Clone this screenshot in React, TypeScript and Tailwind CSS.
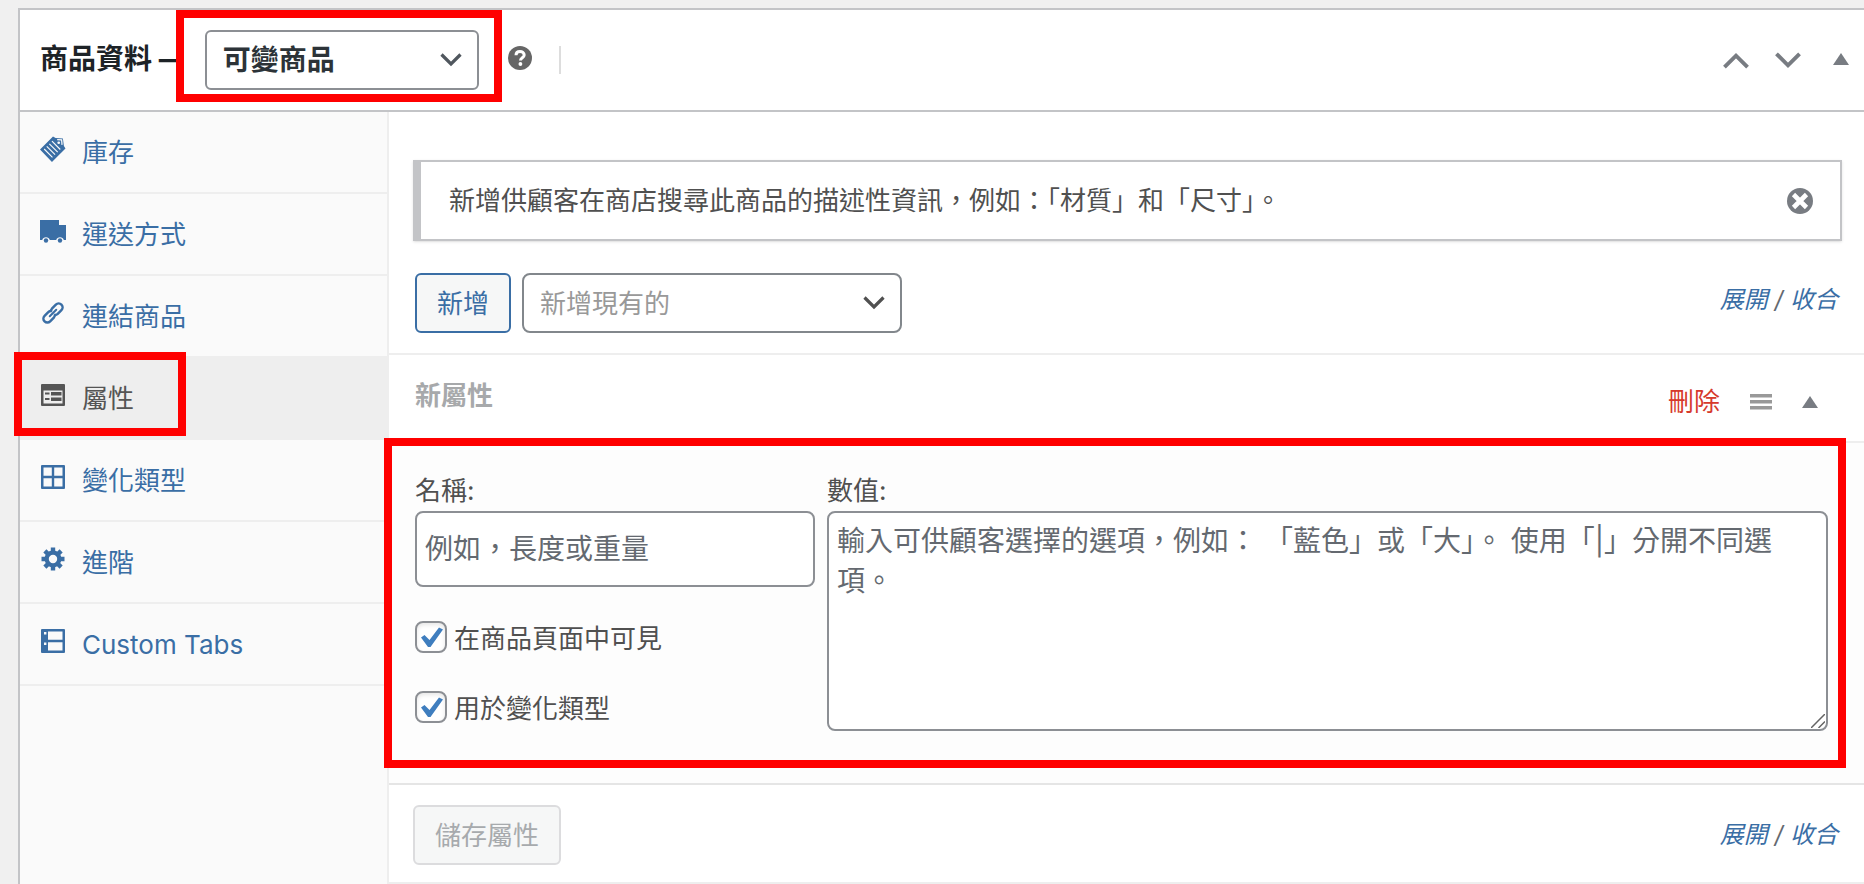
import { useState, type ComponentType, type ReactNode, type SVGProps } from "react";
import { clsx } from "clsx";

type IconProps = SVGProps<SVGSVGElement>;
type Icon = ComponentType<IconProps>;

function InventoryIcon(props: IconProps) {
  return (
    <svg viewBox="0 0 25 25" fill="none" {...props}>
      <path d="M12.500 0.500 15 2 22 2.500 23 9.500 24.500 12 11.500 25 0 13Z" fill="currentColor" />
      <path
        d="M4 12.500 12 20.500M6.500 10 14.500 18M9 7.500 17 15.500M11.500 5 19.500 13"
        stroke="#fafafa"
        strokeWidth="1.100"
      />
      <path d="M16.500 3.500 20.800 3.800 21.200 8.500" stroke="#fafafa" strokeWidth="1.200" />
      <circle cx="18" cy="6.500" r="1.300" fill="#fafafa" />
    </svg>
  );
}

function TruckIcon(props: IconProps) {
  return (
    <svg viewBox="0 0 26 24" fill="currentColor" {...props}>
      <path d="M0 1h19v5h7v15h-2.200a4 4 0 0 0-7.600 0H9.800a4 4 0 0 0-7.600 0H0Z" />
      <circle cx="6" cy="21.500" r="2.200" />
      <circle cx="20" cy="21.500" r="2.200" />
    </svg>
  );
}

function LinkIcon(props: IconProps) {
  return (
    <svg viewBox="0 0 24 24" fill="none" stroke="currentColor" strokeWidth="2.700" {...props}>
      <g transform="rotate(-45 12 12)">
        <path d="M12.500 14.300a4.400 4.400 0 0 1-3.500 2H3.300a4.300 4.300 0 0 1 0-8.600H9a4.400 4.400 0 0 1 3.500 2" />
        <path d="M11.500 9.700a4.400 4.400 0 0 1 3.500-2h5.700a4.300 4.300 0 0 1 0 8.600H15a4.400 4.400 0 0 1-3.500-2" />
        <path d="M7 12h10" strokeWidth="2.200" strokeLinecap="round" />
      </g>
    </svg>
  );
}

function AttributesIcon(props: IconProps) {
  return (
    <svg viewBox="0 0 24 22" fill="currentColor" {...props}>
      <path
        fillRule="evenodd"
        d="M1 0h22a1 1 0 0 1 1 1v20a1 1 0 0 1-1 1H1a1 1 0 0 1-1-1V1a1 1 0 0 1 1-1ZM2.500 6.500v13h19v-13Z"
      />
      <path d="M4 8.500h4.500v2H4ZM10 8h10.500v3.500H10ZM4 14h4.500v2H4ZM10 13.500h10.500V17H10Z" />
    </svg>
  );
}

function VariationsIcon(props: IconProps) {
  return (
    <svg viewBox="0 0 24 24" fill="currentColor" {...props}>
      <path
        fillRule="evenodd"
        d="M1 0h22a1 1 0 0 1 1 1v22a1 1 0 0 1-1 1H1a1 1 0 0 1-1-1V1a1 1 0 0 1 1-1ZM2.500 2.500v8.300h8.300V2.500ZM13.200 2.500v8.300h8.300V2.500ZM2.500 13.200v8.300h8.300v-8.300ZM13.200 13.200v8.300h8.300v-8.300Z"
      />
    </svg>
  );
}

const gearTeeth = [0, 45, 90, 135, 180, 225, 270, 315];

function GearIcon(props: IconProps) {
  return (
    <svg viewBox="0 0 24 24" {...props}>
      {gearTeeth.map((angle) => (
        <path key={angle} d="M9.800 0.500h4.400v6h-4.400Z" fill="currentColor" transform={`rotate(${angle} 12 12)`} />
      ))}
      <circle cx="12" cy="12" r="6.300" fill="none" stroke="currentColor" strokeWidth="4.200" />
    </svg>
  );
}

function CustomTabsIcon(props: IconProps) {
  return (
    <svg viewBox="0 0 24 24" fill="currentColor" {...props}>
      <path
        fillRule="evenodd"
        d="M1 0h22a1 1 0 0 1 1 1v22a1 1 0 0 1-1 1H1a1 1 0 0 1-1-1V1a1 1 0 0 1 1-1ZM7 2.500v8.300h14.500V2.500ZM7 13.200v8.300h14.500v-8.300ZM3 3v2.400h2.400V3ZM3 13.500v2.400h2.400v-2.400Z"
      />
    </svg>
  );
}

function HelpIcon(props: IconProps) {
  return (
    <svg viewBox="0 0 24 24" fill="none" {...props}>
      <circle cx="12" cy="12" r="12" fill="currentColor" />
      <path d="M8 9.200C8 6.600 9.800 5.500 12 5.500s4.200 1.200 4.200 3.500c0 2.700-3.700 2.800-3.700 5.500" stroke="#fff" strokeWidth="3" />
      <circle cx="12.400" cy="18" r="1.900" fill="#fff" />
    </svg>
  );
}

function DismissIcon(props: IconProps) {
  return (
    <svg viewBox="0 0 26 26" fill="none" {...props}>
      <circle cx="13" cy="13" r="13" fill="currentColor" />
      <path d="m6.500 6.500 13 13M19.500 6.500l-13 13" stroke="#fff" strokeWidth="4.600" />
    </svg>
  );
}

function ChevronDown(props: IconProps) {
  return (
    <svg viewBox="0 0 22 14" fill="none" stroke="currentColor" strokeWidth="3.200" {...props}>
      <path d="m1.500 1.500 9.500 9.500 9.500-9.500" />
    </svg>
  );
}

function Triangle(props: IconProps) {
  return (
    <svg viewBox="0 0 16 12" fill="currentColor" {...props}>
      <path d="M8 0 16 12H0Z" />
    </svg>
  );
}

function SortHandle(props: IconProps) {
  return (
    <svg viewBox="0 0 22 16" fill="currentColor" {...props}>
      <path d="M0 0h22v3.500H0ZM0 6h22v3.500H0ZM0 12h22v3.500H0Z" />
    </svg>
  );
}

const tabs: { label: string; icon: Icon; iconClass: string }[] = [
  { label: "庫存", icon: InventoryIcon, iconClass: "h-[26px] w-[26px]" },
  { label: "運送方式", icon: TruckIcon, iconClass: "h-6 w-[26px]" },
  { label: "連結商品", icon: LinkIcon, iconClass: "h-[22px] w-[22px] overflow-visible" },
  { label: "屬性", icon: AttributesIcon, iconClass: "h-[22px] w-6" },
  { label: "變化類型", icon: VariationsIcon, iconClass: "h-6 w-6" },
  { label: "進階", icon: GearIcon, iconClass: "h-6 w-6" },
  { label: "Custom Tabs", icon: CustomTabsIcon, iconClass: "h-6 w-6" },
];

function Highlight({ className }: { className: string }) {
  return <div className={clsx("pointer-events-none absolute z-10 border-8 border-[#ff0000]", className)} />;
}

function ExpandCollapse() {
  return (
    <span className="pr-1 text-2xl leading-10 italic text-[#646970]">
      <a href="#expand" className="text-[#3a6ea5]">展開</a> / <a href="#close" className="text-[#3a6ea5]">收合</a>
    </span>
  );
}

function Checkbox({ id, children }: { id: string; children: ReactNode }) {
  return (
    <div className="flex h-10 items-center gap-[7px]">
      <span className="relative flex h-8 w-8">
        <input
          id={id}
          type="checkbox"
          defaultChecked
          className="peer h-8 w-8 appearance-none rounded-lg border-2 border-[#8c8f94] bg-white shadow-[inset_0_2px_4px_rgba(0,0,0,0.1)]"
        />
        <svg
          viewBox="0 0 32 32"
          className="pointer-events-none absolute inset-0 hidden h-8 w-8 fill-[#3f7ebf] peer-checked:block"
        >
          <path d="M6 16.500 9.500 14 14.500 19 24 6.500 28 8.500 15.500 26H13Z" />
        </svg>
      </span>
      <label htmlFor={id} className="pt-1">{children}</label>
    </div>
  );
}

function Sidebar() {
  const [active, setActive] = useState("屬性");

  return (
    <nav className="w-[369px] shrink-0 border-r-2 border-[#eee] bg-[#fafafa]">
      <ul>
        {tabs.map(({ label, icon: TabIcon, iconClass }) => {
          const isActive = label === active;
          return (
            <li key={label} className="relative">
              <a
                href={`#${label}`}
                onClick={() => setActive(label)}
                className={clsx(
                  "flex h-[82px] items-center gap-4 border-b-2 border-[#eee] pl-5",
                  isActive ? "bg-[#eee] text-[#555]" : "text-[#3a6ea5]",
                )}
              >
                <span className="flex w-[26px] justify-center pb-1.5">
                  <TabIcon className={iconClass} />
                </span>
                <span className="pt-0.5">{label}</span>
              </a>
              {isActive && <Highlight className="-top-[6px] -left-[6px] h-[84px] w-[172px]" />}
            </li>
          );
        })}
      </ul>
    </nav>
  );
}

export default function App() {
  return (
    <div
      lang="zh-TW"
      className="min-h-screen bg-[#f0f0f0] pt-2 pl-[18px] font-[Inter,'Noto_Sans_CJK_TC',sans-serif] text-[26px] leading-10 text-[#505050]"
    >
      <section className="flex min-h-[876px] flex-col border-t-2 border-l-2 border-[#c3c4c7] bg-white">
        <header className="flex h-[102px] items-center justify-between border-b-2 border-[#c3c4c7]">
          <div className="flex items-center">
            <label
              htmlFor="product-type"
              className="pb-0.5 pl-5 text-[28px] font-bold whitespace-nowrap text-[#1d2327]"
            >
              商品資料 —
            </label>
            <div className="relative ml-[18px] flex items-center">
              <Highlight className="-top-[20px] -right-[23px] -bottom-3 -left-[29px] bg-white" />
              <select
                id="product-type"
                className="relative z-20 h-[60px] w-[274px] appearance-none rounded-md border-2 border-[#8c8f94] bg-white pl-4 text-[28px] font-bold text-[#2c3338]"
              >
                <option>可變商品</option>
              </select>
              <ChevronDown className="pointer-events-none absolute right-[17px] z-20 h-[14px] w-[22px] text-[#50575e]" />
            </div>
            <button type="button" aria-label="說明" className="ml-[29px] pb-1 text-[#666]">
              <HelpIcon className="h-6 w-6" />
            </button>
            <span className="ml-[27px] h-7 border-l-2 border-[#ddd]" />
          </div>
          <div className="flex items-center gap-6 pr-[15px] text-[#787c82]">
            <button type="button" aria-label="上移">
              <ChevronDown className="h-[17px] w-7 rotate-180" />
            </button>
            <button type="button" aria-label="下移">
              <ChevronDown className="h-[17px] w-7" />
            </button>
            <button type="button" aria-label="切換面板" className="pb-0.5 pl-[7px]">
              <Triangle className="h-3 w-4" />
            </button>
          </div>
        </header>

        <div className="flex grow">
          <Sidebar />

          <main className="min-w-0 grow">
            <div className="border-b-2 border-[#eee] pt-12 pr-[22px] pb-5 pl-6">
              <div className="flex h-[81px] items-center justify-between border-2 border-l-8 border-[#c3c4c7] pr-[27px] pl-7 shadow-sm">
                <p>新增供顧客在商店搜尋此商品的描述性資訊，例如：「材質」和「尺寸」。</p>
                <button type="button" aria-label="關閉" className="text-[#787c82]">
                  <DismissIcon className="h-[26px] w-[26px]" />
                </button>
              </div>
              <div className="mt-8 flex items-center pl-[2px]">
                <button
                  type="button"
                  className="h-[60px] rounded-md border-2 border-[#3a6ea5] bg-[#f6f7f7] px-5 pt-0.5 text-[#3a6ea5]"
                >
                  新增
                </button>
                <div className="relative ml-[11px] flex items-center">
                  <select
                    aria-label="新增現有的"
                    className="h-[60px] w-[380px] appearance-none rounded-lg border-2 border-[#82878c] bg-white pt-0.5 pl-4 text-[#999]"
                  >
                    <option>新增現有的</option>
                  </select>
                  <ChevronDown className="pointer-events-none absolute right-[17px] h-[14px] w-[22px] text-[#505050]" />
                </div>
                <div className="ml-auto pb-2">
                  <ExpandCollapse />
                </div>
              </div>
            </div>

            <div className="flex h-[88px] items-center justify-between border-b-2 border-[#eee] pr-[46px] pl-[26px]">
              <h3 className="pb-1 font-bold text-[#a7a9ab]">新屬性</h3>
              <div className="flex items-center pt-2">
                <a href="#delete" className="text-[#d63a2c]">刪除</a>
                <SortHandle className="ml-[30px] h-4 w-[22px] text-[#999]" />
                <button type="button" aria-label="收合屬性" className="ml-[30px] text-[#787c82]">
                  <Triangle className="h-3 w-4" />
                </button>
              </div>
            </div>

            <div className="relative flex gap-3 border-b-2 border-[#e5e5e5] bg-[#fdfdfd] pt-7 pr-9 pb-[52px] pl-[26px]">
              <Highlight className="-top-[5px] right-[18px] bottom-[15px] -left-[5px]" />
              <div className="w-[400px] shrink-0">
                <label htmlFor="attribute-name" className="block">名稱:</label>
                <input
                  id="attribute-name"
                  type="text"
                  placeholder="例如，長度或重量"
                  className="mb-[30px] block h-[76px] w-full rounded-lg border-2 border-[#8c8f94] bg-white px-2 text-[28px] placeholder:text-[#646970]"
                />
                <div className="flex flex-col gap-[30px]">
                  <Checkbox id="attribute-visible">在商品頁面中可見</Checkbox>
                  <Checkbox id="attribute-variation">用於變化類型</Checkbox>
                </div>
              </div>
              <div className="relative min-w-0 grow">
                <label htmlFor="attribute-values" className="block">數值:</label>
                <textarea
                  id="attribute-values"
                  placeholder="輸入可供顧客選擇的選項，例如： 「藍色」或「大」。 使用「|」分開不同選項。"
                  className="block h-[220px] w-full resize-none rounded-lg border-2 border-[#8c8f94] bg-white px-2 py-2 text-[28px] leading-10 placeholder:text-[#646970]"
                />
                <svg
                  viewBox="0 0 14 14"
                  className="pointer-events-none absolute right-[3px] bottom-[3px] h-[14px] w-[14px] stroke-[#646464] stroke-[1.5]"
                >
                  <path d="M0 14 14 0M7.500 14 14 7.500" />
                </svg>
              </div>
            </div>

            <div className="flex items-center justify-between border-b-2 border-[#eee] pt-5 pr-[22px] pb-[17px] pl-6">
              <button
                type="button"
                disabled
                className="h-[60px] rounded-md border-2 border-[#dcdcde] bg-[#f6f7f7] px-5 pt-0.5 text-[#a7aaad]"
              >
                儲存屬性
              </button>
              <ExpandCollapse />
            </div>
          </main>
        </div>
      </section>
    </div>
  );
}
